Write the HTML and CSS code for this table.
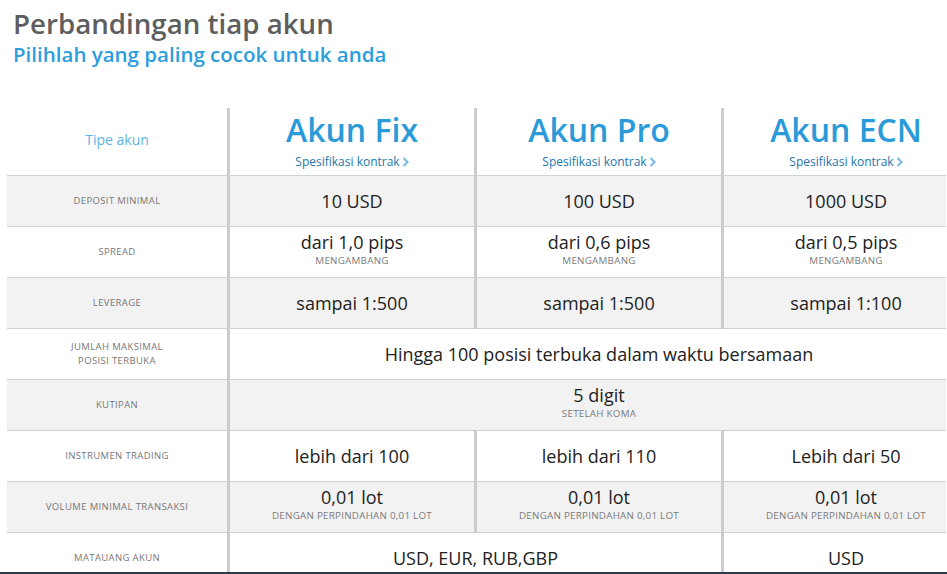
FILE: index.html
```html
<!DOCTYPE html>
<html lang="id">
<head>
<meta charset="utf-8">
<title>Perbandingan tiap akun</title>
<link rel="stylesheet" href="styles.css">
</head>
<body>
<div class="page">
  <h1 class="title">Perbandingan tiap akun</h1>
  <h2 class="subtitle">Pilihlah yang paling cocok untuk anda</h2>
  <div class="table-wrap">
    <table class="compare">
      <colgroup>
        <col class="c-label">
        <col class="c-acc">
        <col class="c-acc">
        <col class="c-acc">
      </colgroup>
      <thead>
        <tr class="head-row">
          <th class="label type">Tipe akun</th>
          <th class="acc"><div class="acc-name">Akun Fix</div><a class="spec" href="#">Spesifikasi kontrak<svg class="chev" width="7" height="10" viewBox="0 0 7 10"><polyline points="1.5,1 5.5,5 1.5,9" fill="none" stroke="#7dbbe5" stroke-width="2.2"/></svg></a></th>
          <th class="acc"><div class="acc-name">Akun Pro</div><a class="spec" href="#">Spesifikasi kontrak<svg class="chev" width="7" height="10" viewBox="0 0 7 10"><polyline points="1.5,1 5.5,5 1.5,9" fill="none" stroke="#7dbbe5" stroke-width="2.2"/></svg></a></th>
          <th class="acc"><div class="acc-name">Akun ECN</div><a class="spec" href="#">Spesifikasi kontrak<svg class="chev" width="7" height="10" viewBox="0 0 7 10"><polyline points="1.5,1 5.5,5 1.5,9" fill="none" stroke="#7dbbe5" stroke-width="2.2"/></svg></a></th>
        </tr>
      </thead>
      <tbody>
        <tr class="grey">
          <td class="label">Deposit minimal</td>
          <td class="val">10 USD</td>
          <td class="val">100 USD</td>
          <td class="val">1000 USD</td>
        </tr>
        <tr>
          <td class="label">Spread</td>
          <td class="val has-sub">dari 1,0 pips<span class="sub">Mengambang</span></td>
          <td class="val has-sub">dari 0,6 pips<span class="sub">Mengambang</span></td>
          <td class="val has-sub">dari 0,5 pips<span class="sub">Mengambang</span></td>
        </tr>
        <tr class="grey">
          <td class="label">Leverage</td>
          <td class="val">sampai 1:500</td>
          <td class="val">sampai 1:500</td>
          <td class="val">sampai 1:100</td>
        </tr>
        <tr>
          <td class="label">Jumlah maksimal<br>posisi terbuka</td>
          <td class="val" colspan="3">Hingga 100 posisi terbuka dalam waktu bersamaan</td>
        </tr>
        <tr class="grey">
          <td class="label">Kutipan</td>
          <td class="val has-sub" colspan="3">5 digit<span class="sub">Setelah koma</span></td>
        </tr>
        <tr>
          <td class="label">Instrumen trading</td>
          <td class="val">lebih dari 100</td>
          <td class="val">lebih dari 110</td>
          <td class="val">Lebih dari 50</td>
        </tr>
        <tr class="grey">
          <td class="label">Volume minimal transaksi</td>
          <td class="val has-sub">0,01 lot<span class="sub">Dengan perpindahan 0,01 lot</span></td>
          <td class="val has-sub">0,01 lot<span class="sub">Dengan perpindahan 0,01 lot</span></td>
          <td class="val has-sub">0,01 lot<span class="sub">Dengan perpindahan 0,01 lot</span></td>
        </tr>
        <tr>
          <td class="label">Matauang akun</td>
          <td class="val" colspan="2">USD, EUR, RUB,GBP</td>
          <td class="val">USD</td>
        </tr>
      </tbody>
    </table>
  </div>
</div>
<div class="footer-edge"></div>
</body>
</html>
```

FILE: styles.css
```css
html, body {
  margin: 0;
  padding: 0;
  background: #fff;
  overflow: hidden;
}

body {
  font-family: "Open Sans", "Liberation Sans", sans-serif;
  color: #222;
}

.page {
  padding: 0 0 0 7px;
}

.title {
  margin: 5px 0 0 6px;
  font-size: 27.7px;
  line-height: 36px;
  font-weight: 600;
  color: #5e5e5e;
}

.subtitle {
  margin: 0 0 0 6px;
  font-size: 20.5px;
  line-height: 26px;
  font-weight: 600;
  color: #2b9ddd;
}

.table-wrap {
  margin-top: 41px;
  width: 939px;
  overflow: hidden;
}

.compare {
  width: 961px;
  border-collapse: separate;
  border-spacing: 0;
  table-layout: fixed;
}

.c-label { width: 220px; }
.c-acc { width: 247px; }

.compare th,
.compare td {
  padding: 0;
  text-align: center;
  vertical-align: middle;
  border-bottom: 1px solid #d0d0d0;
}

.compare th + th,
.compare td + td {
  border-left: 3px solid #cccccc;
}

.head-row th {
  height: 64px;
  font-weight: 400;
}

.compare tbody td {
  height: 50px;
}

.grey td {
  background: #f2f2f2;
}

.label {
  font-size: 9.5px;
  line-height: 14px;
  text-transform: uppercase;
  color: #777;
  letter-spacing: 0.38px;
  padding-top: 1px;
}

.label.type {
  font-size: 14px;
  line-height: 18px;
  text-transform: none;
  color: #5cb3e6;
  letter-spacing: 0;
  padding-top: 0;
  padding-bottom: 3px;
}

.acc-name {
  font-size: 32px;
  line-height: 38px;
  font-weight: 600;
  color: #2a9bd8;
  margin-top: -2px;
}

.spec {
  display: inline-flex;
  align-items: center;
  gap: 2px;
  font-size: 12px;
  line-height: 16px;
  color: #2276ad;
  text-decoration: none;
  margin-top: 2px;
}

.chev {
  display: block;
}

.val {
  font-size: 18px;
  line-height: 22px;
  color: #222;
}

.compare td.has-sub {
  padding-bottom: 5px;
  height: 45px;
}

.sub {
  display: block;
  font-size: 9.8px;
  line-height: 16px;
  text-transform: uppercase;
  color: #7a7a7a;
  letter-spacing: 0.25px;
}

.footer-edge {
  position: fixed;
  left: 0;
  right: 0;
  bottom: 0;
  height: 2px;
  background: #2b3a4b;
}
```
